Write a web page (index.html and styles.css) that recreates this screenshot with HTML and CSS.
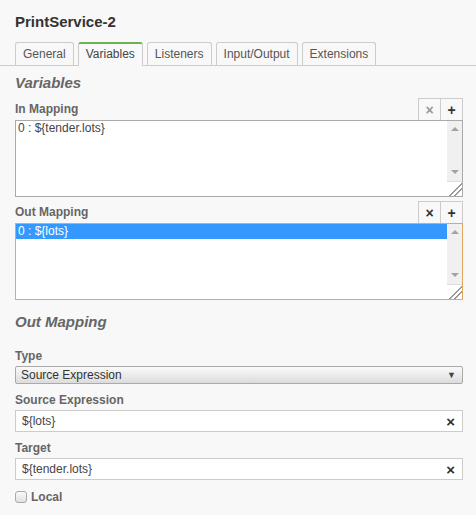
FILE: index.html
```html
<!DOCTYPE html>
<html lang="en">
<head>
    <meta charset="UTF-8">
    <title>PrintService-2</title>
    <link rel="stylesheet" href="styles.css">
</head>
<body>
    <div class="header">
        <h1>PrintService-2</h1>
    </div>
    <ul class="tabs">
        <li>General</li>
        <li class="active">Variables</li>
        <li>Listeners</li>
        <li>Input/Output</li>
        <li>Extensions</li>
    </ul>

    <div class="content">
        <h2 class="group-title">Variables</h2>

        <div class="list-head">
            <label>In Mapping</label>
            <div class="list-actions">
                <button class="btn disabled">&times;</button>
                <button class="btn">+</button>
            </div>
        </div>
        <div class="listbox">
            <div class="list-items">
                <div class="item">0 : ${tender.lots}</div>
            </div>
            <div class="scrollbar">
                <span class="arrow up"></span>
                <span class="arrow down"></span>
                <span class="grip"></span>
            </div>
        </div>

        <div class="list-head second">
            <label>Out Mapping</label>
            <div class="list-actions">
                <button class="btn">&times;</button>
                <button class="btn">+</button>
            </div>
        </div>
        <div class="listbox focused">
            <div class="list-items">
                <div class="item selected">0 : ${lots}</div>
            </div>
            <div class="scrollbar">
                <span class="arrow up"></span>
                <span class="arrow down"></span>
                <span class="grip"></span>
            </div>
        </div>

        <h2 class="group-title sub">Out Mapping</h2>

        <div class="field first">
            <label>Type</label>
            <div class="select">
                <span>Source Expression</span>
                <span class="caret">&#9660;</span>
            </div>
        </div>

        <div class="field">
            <label>Source Expression</label>
            <div class="input">
                <span>${lots}</span>
                <span class="clear">&times;</span>
            </div>
        </div>

        <div class="field">
            <label>Target</label>
            <div class="input">
                <span>${tender.lots}</span>
                <span class="clear">&times;</span>
            </div>
        </div>

        <div class="checkbox-row">
            <span class="checkbox"></span>
            <label>Local</label>
        </div>
    </div>
</body>
</html>
```

FILE: styles.css
```css
body {
    font-family: "Liberation Sans", Arial, sans-serif;
    font-size: 12px;
    background-color: #f8f8f8;
    color: #333;
    margin: 0;
    padding: 0;
}
.header {
    padding: 13px 15px 0 15px;
}
.header h1 {
    margin: 0 0 11px 0;
    font-size: 15px;
    line-height: 18px;
    color: #333;
}
.tabs {
    display: flex;
    margin: 0;
    padding: 0 0 0 15px;
    list-style: none;
    border-bottom: 1px solid #ccc;
    height: 23px;
}
.tabs li {
    height: 22px;
    line-height: 22px;
    padding: 0 7px;
    margin-right: 4px;
    border: 1px solid #ccc;
    border-bottom: none;
    border-radius: 3px 3px 0 0;
    color: #555;
    background: #f8f8f8;
}
.tabs li.active {
    border-top: 2px solid #6cb24f;
    height: 22px;
    line-height: 21px;
    margin-bottom: -1px;
    color: #444;
}
.content {
    padding: 0 13px 20px 15px;
}
.group-title {
    margin: 8px 0 0 0;
    font-size: 15px;
    line-height: 18px;
    font-style: italic;
    color: #666;
}
.group-title.sub {
    margin-top: 13px;
}
.list-head {
    display: flex;
    justify-content: space-between;
    align-items: flex-end;
    margin-top: 6px;
}
.list-head.second {
    margin-top: 4px;
}
.list-head label,
.field label,
.checkbox-row label {
    font-weight: bold;
    color: #666;
    line-height: 14px;
}
.list-head label {
    margin-bottom: 4px;
}
.list-actions {
    display: flex;
}
.btn {
    width: 23px;
    height: 22px;
    margin: 0 0 0 -1px;
    padding: 0;
    border: 1px solid #ccc;
    border-bottom: none;
    background: #f8f8f8;
    font-family: "Liberation Sans", Arial, sans-serif;
    font-size: 14px;
    font-weight: bold;
    line-height: 20px;
    color: #333;
}
.btn.disabled {
    color: #999;
}
.listbox {
    display: flex;
    height: 75px;
    border: 1px solid #aaa;
    background: #fff;
}
.listbox.focused {
    border-color: #e0a95f;
}
.list-items {
    flex: 1;
}
.item {
    height: 15px;
    line-height: 14px;
    padding-left: 2px;
    color: #444;
}
.item.selected {
    background: #3399ff;
    color: #fff;
}
.scrollbar {
    width: 15px;
    position: relative;
    background: #f0f0f0;
}
.arrow {
    position: absolute;
    left: 4px;
    width: 0;
    height: 0;
    border-left: 4px solid transparent;
    border-right: 4px solid transparent;
}
.arrow.up {
    top: 6px;
    border-bottom: 4px solid #a3a3a3;
}
.arrow.down {
    top: 49px;
    border-top: 4px solid #a3a3a3;
}
.grip {
    position: absolute;
    left: 0;
    bottom: 0;
    width: 15px;
    height: 15px;
    background: #fff linear-gradient(135deg, transparent 55%, #999 55%, #999 62%, transparent 62%, transparent 72%, #999 72%, #999 79%, transparent 79%);
    border-top: 1px solid #ddd;
    box-sizing: border-box;
}
.field {
    margin-top: 9px;
}
.field.first {
    margin-top: 18px;
}
.field label {
    display: block;
    margin-bottom: 3px;
}
.select {
    display: flex;
    justify-content: space-between;
    align-items: center;
    height: 18px;
    box-sizing: border-box;
    padding: 0 6px 0 5px;
    border: 1px solid #aaa;
    border-radius: 2px;
    background: linear-gradient(#fafafa, #dcdcdc);
    color: #333;
}
.caret {
    font-size: 9px;
    color: #444;
}
.input {
    display: flex;
    justify-content: space-between;
    align-items: center;
    height: 22px;
    box-sizing: border-box;
    padding: 0 7px 0 6px;
    border: 1px solid #ccc;
    background: #fff;
    color: #444;
}
.clear {
    font-size: 15px;
    font-weight: bold;
    color: #333;
}
.checkbox-row {
    display: flex;
    align-items: center;
    margin-top: 10px;
}
.checkbox {
    width: 12px;
    height: 12px;
    box-sizing: border-box;
    border: 1px solid #aaa;
    border-radius: 3px;
    background: linear-gradient(#fafafa, #e0e0e0);
    margin-right: 4px;
}
```
